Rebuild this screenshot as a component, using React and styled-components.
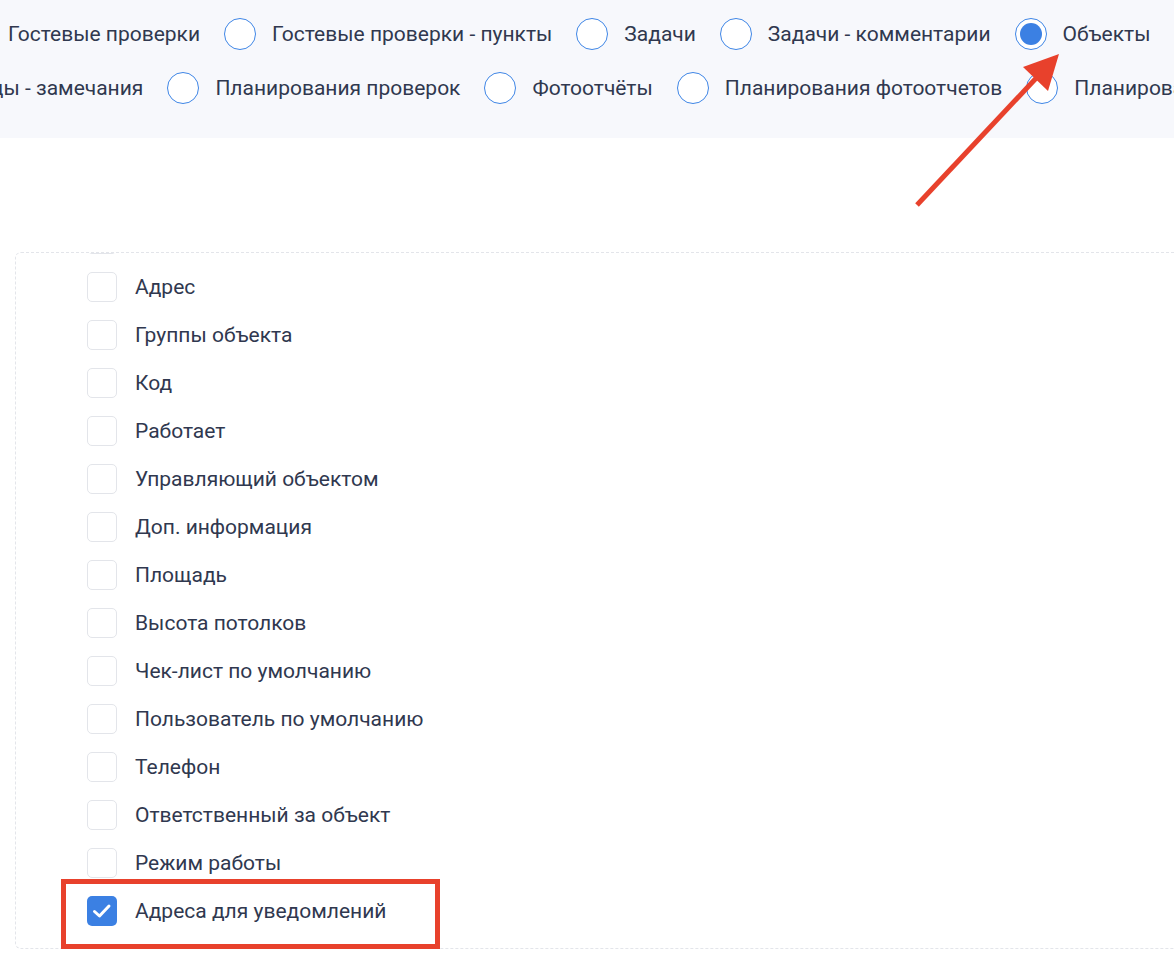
import React from 'react';
import styled, { createGlobalStyle } from 'styled-components';

const GlobalStyle = createGlobalStyle`
  html, body {
    margin: 0;
    padding: 0;
    background: #ffffff;
    overflow: hidden;
  }
  body {
    font-family: Roboto, "Noto Sans", "Liberation Sans", sans-serif;
    color: #30384f;
  }
`;

const Page = styled.div`
  position: relative;
  width: 1174px;
  height: 966px;
  overflow: hidden;
`;

const TypePanel = styled.div`
  background-color: #f7f8fc;
  padding: 16px 0 32px;
  display: flex;
  flex-direction: column;
  gap: 18px;
`;

const RadioRow = styled.div`
  display: flex;
  align-items: center;
  gap: 24px;
  height: 36px;
  white-space: nowrap;
  margin-left: ${(p) => p.$offset}px;
`;

const RadioItem = styled.label`
  display: flex;
  align-items: center;
  gap: 16px;
  font-size: 21px;
  line-height: 1;
`;

const RadioCircle = styled.span`
  flex: none;
  width: 32px;
  height: 32px;
  box-sizing: border-box;
  border-radius: 50%;
  border: 1.5px solid #3f86e6;
  background: #ffffff;
  display: flex;
  align-items: center;
  justify-content: center;

  &::after {
    content: '';
    display: ${(p) => (p.$checked ? 'block' : 'none')};
    width: 22px;
    height: 22px;
    border-radius: 50%;
    background: #3b80e3;
  }
`;

const ListBox = styled.div`
  margin: 114px -60px 15px 15px;
  border: 1px dashed #e3e5ea;
  border-radius: 6px;
  height: 697px;
  overflow: hidden;
  box-sizing: border-box;
`;

const List = styled.div`
  margin-top: -38px;
  padding-left: 71px;
  display: flex;
  flex-direction: column;
`;

const CheckRow = styled.label`
  display: flex;
  align-items: center;
  gap: 18px;
  height: 48px;
  font-size: 21px;
`;

const CheckBox = styled.span`
  flex: none;
  width: 30px;
  height: 30px;
  box-sizing: border-box;
  border-radius: 5px;
  border: ${(p) => (p.$checked ? 'none' : '1px solid #e3e5ea')};
  background: ${(p) => (p.$checked ? '#3b80e3' : '#ffffff')};
  display: flex;
  align-items: center;
  justify-content: center;
`;

const Highlight = styled.div`
  position: absolute;
  left: 61px;
  top: 879px;
  width: 379px;
  height: 70px;
  box-sizing: border-box;
  border: 5px solid #e8412c;
  pointer-events: none;
`;

const ArrowLayer = styled.svg`
  position: absolute;
  left: 0;
  top: 0;
  pointer-events: none;
`;

const row1 = [
  { label: 'Гостевые проверки', noRadio: true },
  { label: 'Гостевые проверки - пункты' },
  { label: 'Задачи' },
  { label: 'Задачи - комментарии' },
  { label: 'Объекты', checked: true },
];

const row2 = [
  { label: 'цы - замечания', noRadio: true },
  { label: 'Планирования проверок' },
  { label: 'Фотоотчёты' },
  { label: 'Планирования фотоотчетов' },
  { label: 'Планирования' },
];

const fields = [
  { label: 'Название' },
  { label: 'Адрес' },
  { label: 'Группы объекта' },
  { label: 'Код' },
  { label: 'Работает' },
  { label: 'Управляющий объектом' },
  { label: 'Доп. информация' },
  { label: 'Площадь' },
  { label: 'Высота потолков' },
  { label: 'Чек-лист по умолчанию' },
  { label: 'Пользователь по умолчанию' },
  { label: 'Телефон' },
  { label: 'Ответственный за объект' },
  { label: 'Режим работы' },
  { label: 'Адреса для уведомлений', checked: true },
];

const Check = () => (
  <svg width="22" height="22" viewBox="0 0 22 22">
    <path d="M3.5 11.5 L8.5 16 L18 6" fill="none" stroke="#fff" strokeWidth="3" strokeLinecap="round" strokeLinejoin="round" />
  </svg>
);

const App = () => {
  return (
    <Page>
      <GlobalStyle />
      <TypePanel>
        <RadioRow $offset={8}>
          {row1.map((it) => (
            <RadioItem key={it.label}>
              {!it.noRadio && <RadioCircle $checked={it.checked} />}
              {it.label}
            </RadioItem>
          ))}
        </RadioRow>
        <RadioRow $offset={-9}>
          {row2.map((it) => (
            <RadioItem key={it.label}>
              {!it.noRadio && <RadioCircle $checked={it.checked} />}
              {it.label}
            </RadioItem>
          ))}
        </RadioRow>
      </TypePanel>

      <ListBox>
        <List>
          {fields.map((f) => (
            <CheckRow key={f.label}>
              <CheckBox $checked={f.checked}>{f.checked && <Check />}</CheckBox>
              {f.label}
            </CheckRow>
          ))}
        </List>
      </ListBox>

      <Highlight />
      <ArrowLayer width="1174" height="966" viewBox="0 0 1174 966">
        <line x1="917" y1="205" x2="1040" y2="74" stroke="#e8412c" strokeWidth="5" />
        <polygon points="1059,54 1048,91 1023,67" fill="#e8412c" />
      </ArrowLayer>
    </Page>
  );
};

export default App;
